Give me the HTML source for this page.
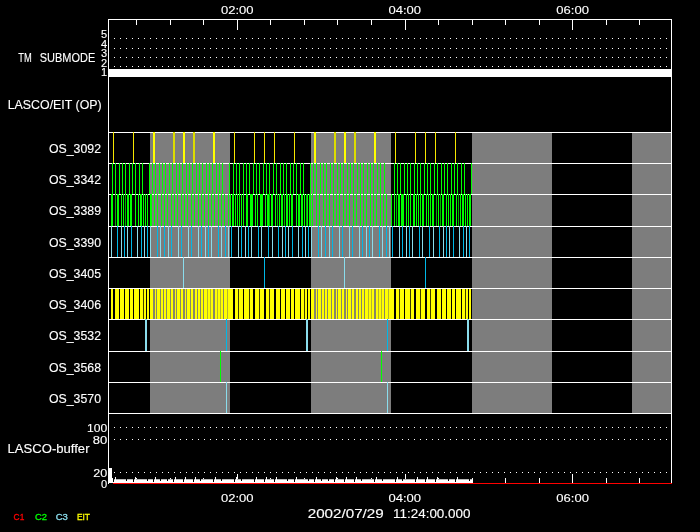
<!DOCTYPE html>
<html lang="en"><head><meta charset="utf-8"><title>LASCO/EIT schedule plot</title>
<style>
html,body{margin:0;padding:0;background:#000;}
body{width:700px;height:532px;overflow:hidden;}
svg{display:block;will-change:transform;font-family:"Liberation Sans",sans-serif;}
svg rect{shape-rendering:crispEdges;}
</style></head><body>
<svg width="700" height="532" viewBox="0 0 700 532">
<rect x="0" y="0" width="700" height="532" fill="#000"/>
<rect x="150" y="132" width="80" height="281" fill="#7d7d7d"/>
<rect x="311" y="132" width="80" height="281" fill="#7d7d7d"/>
<rect x="472" y="132" width="80" height="281" fill="#7d7d7d"/>
<rect x="632" y="132" width="39" height="281" fill="#7d7d7d"/>
<rect x="108" y="132" width="564" height="1" fill="#fff"/>
<rect x="108" y="163" width="564" height="1" fill="#fff"/>
<rect x="108" y="194" width="564" height="1" fill="#fff"/>
<rect x="108" y="226" width="564" height="1" fill="#fff"/>
<rect x="108" y="257" width="564" height="1" fill="#fff"/>
<rect x="108" y="288" width="564" height="1" fill="#fff"/>
<rect x="108" y="319" width="564" height="1" fill="#fff"/>
<rect x="108" y="351" width="564" height="1" fill="#fff"/>
<rect x="108" y="382" width="564" height="1" fill="#fff"/>
<rect x="108" y="413" width="564" height="1" fill="#fff"/>
<rect x="113" y="132" width="1" height="31" fill="#f6e600"/>
<rect x="133" y="132" width="1" height="31" fill="#f6e600"/>
<rect x="153" y="132" width="2" height="31" fill="#ffff00"/>
<rect x="173" y="132" width="2" height="31" fill="#dcdc00"/>
<rect x="183" y="132" width="2" height="31" fill="#ffff00"/>
<rect x="193" y="132" width="2" height="31" fill="#dcdc00"/>
<rect x="213" y="132" width="2" height="31" fill="#ffff00"/>
<rect x="234" y="132" width="1" height="31" fill="#f6e600"/>
<rect x="254" y="132" width="1" height="31" fill="#f6e600"/>
<rect x="264" y="132" width="1" height="31" fill="#f6e600"/>
<rect x="274" y="132" width="1" height="31" fill="#f6e600"/>
<rect x="294" y="132" width="1" height="31" fill="#f6e600"/>
<rect x="314" y="132" width="2" height="31" fill="#ffff00"/>
<rect x="334" y="132" width="2" height="31" fill="#dcdc00"/>
<rect x="344" y="132" width="2" height="31" fill="#ffff00"/>
<rect x="354" y="132" width="2" height="31" fill="#dcdc00"/>
<rect x="374" y="132" width="2" height="31" fill="#ffff00"/>
<rect x="395" y="132" width="1" height="31" fill="#f6e600"/>
<rect x="415" y="132" width="1" height="31" fill="#f6e600"/>
<rect x="425" y="132" width="1" height="31" fill="#f6e600"/>
<rect x="435" y="132" width="1" height="31" fill="#f6e600"/>
<rect x="455" y="132" width="1" height="31" fill="#f6e600"/>
<rect x="112" y="163" width="1" height="31" fill="#00ff00"/>
<rect x="115" y="163" width="1" height="31" fill="#00ff00"/>
<rect x="119" y="163" width="1" height="31" fill="#00ff00"/>
<rect x="122" y="163" width="1" height="31" fill="#00ff00"/>
<rect x="125" y="163" width="1" height="31" fill="#00ff00"/>
<rect x="129" y="163" width="1" height="31" fill="#00ff00"/>
<rect x="132" y="163" width="1" height="31" fill="#00ff00"/>
<rect x="135" y="163" width="1" height="31" fill="#00ff00"/>
<rect x="139" y="163" width="1" height="31" fill="#00ff00"/>
<rect x="142" y="163" width="1" height="31" fill="#00ff00"/>
<rect x="149" y="163" width="1" height="31" fill="#00ff00"/>
<rect x="152" y="163" width="1" height="31" fill="#00ff00"/>
<rect x="155" y="163" width="1" height="31" fill="#00ff00"/>
<rect x="159" y="163" width="1" height="31" fill="#00ff00"/>
<rect x="162" y="163" width="1" height="31" fill="#00ff00"/>
<rect x="165" y="163" width="1" height="31" fill="#00ff00"/>
<rect x="169" y="163" width="1" height="31" fill="#00ff00"/>
<rect x="172" y="163" width="1" height="31" fill="#00ff00"/>
<rect x="176" y="163" width="1" height="31" fill="#00ff00"/>
<rect x="179" y="163" width="1" height="31" fill="#00ff00"/>
<rect x="182" y="163" width="1" height="31" fill="#00ff00"/>
<rect x="186" y="163" width="1" height="31" fill="#00ff00"/>
<rect x="189" y="163" width="1" height="31" fill="#00ff00"/>
<rect x="192" y="163" width="1" height="31" fill="#00ff00"/>
<rect x="196" y="163" width="1" height="31" fill="#00ff00"/>
<rect x="199" y="163" width="1" height="31" fill="#00ff00"/>
<rect x="202" y="163" width="1" height="31" fill="#00ff00"/>
<rect x="206" y="163" width="1" height="31" fill="#00ff00"/>
<rect x="209" y="163" width="1" height="31" fill="#00ff00"/>
<rect x="212" y="163" width="1" height="31" fill="#00ff00"/>
<rect x="216" y="163" width="1" height="31" fill="#00ff00"/>
<rect x="219" y="163" width="1" height="31" fill="#00ff00"/>
<rect x="222" y="163" width="1" height="31" fill="#00ff00"/>
<rect x="229" y="163" width="1" height="31" fill="#00ff00"/>
<rect x="233" y="163" width="1" height="31" fill="#00ff00"/>
<rect x="236" y="163" width="1" height="31" fill="#00ff00"/>
<rect x="239" y="163" width="1" height="31" fill="#00ff00"/>
<rect x="243" y="163" width="1" height="31" fill="#00ff00"/>
<rect x="246" y="163" width="1" height="31" fill="#00ff00"/>
<rect x="249" y="163" width="1" height="31" fill="#00ff00"/>
<rect x="253" y="163" width="1" height="31" fill="#00ff00"/>
<rect x="256" y="163" width="1" height="31" fill="#00ff00"/>
<rect x="259" y="163" width="1" height="31" fill="#00ff00"/>
<rect x="263" y="163" width="1" height="31" fill="#00ff00"/>
<rect x="266" y="163" width="1" height="31" fill="#00ff00"/>
<rect x="269" y="163" width="1" height="31" fill="#00ff00"/>
<rect x="273" y="163" width="1" height="31" fill="#00ff00"/>
<rect x="276" y="163" width="1" height="31" fill="#00ff00"/>
<rect x="280" y="163" width="1" height="31" fill="#00ff00"/>
<rect x="283" y="163" width="1" height="31" fill="#00ff00"/>
<rect x="286" y="163" width="1" height="31" fill="#00ff00"/>
<rect x="290" y="163" width="1" height="31" fill="#00ff00"/>
<rect x="293" y="163" width="1" height="31" fill="#00ff00"/>
<rect x="296" y="163" width="1" height="31" fill="#00ff00"/>
<rect x="300" y="163" width="1" height="31" fill="#00ff00"/>
<rect x="303" y="163" width="1" height="31" fill="#00ff00"/>
<rect x="310" y="163" width="1" height="31" fill="#00ff00"/>
<rect x="313" y="163" width="1" height="31" fill="#00ff00"/>
<rect x="316" y="163" width="1" height="31" fill="#00ff00"/>
<rect x="320" y="163" width="1" height="31" fill="#00ff00"/>
<rect x="323" y="163" width="1" height="31" fill="#00ff00"/>
<rect x="326" y="163" width="1" height="31" fill="#00ff00"/>
<rect x="330" y="163" width="1" height="31" fill="#00ff00"/>
<rect x="333" y="163" width="1" height="31" fill="#00ff00"/>
<rect x="337" y="163" width="1" height="31" fill="#00ff00"/>
<rect x="340" y="163" width="1" height="31" fill="#00ff00"/>
<rect x="343" y="163" width="1" height="31" fill="#00ff00"/>
<rect x="347" y="163" width="1" height="31" fill="#00ff00"/>
<rect x="350" y="163" width="1" height="31" fill="#00ff00"/>
<rect x="353" y="163" width="1" height="31" fill="#00ff00"/>
<rect x="357" y="163" width="1" height="31" fill="#00ff00"/>
<rect x="360" y="163" width="1" height="31" fill="#00ff00"/>
<rect x="363" y="163" width="1" height="31" fill="#00ff00"/>
<rect x="367" y="163" width="1" height="31" fill="#00ff00"/>
<rect x="370" y="163" width="1" height="31" fill="#00ff00"/>
<rect x="373" y="163" width="1" height="31" fill="#00ff00"/>
<rect x="377" y="163" width="1" height="31" fill="#00ff00"/>
<rect x="380" y="163" width="1" height="31" fill="#00ff00"/>
<rect x="384" y="163" width="1" height="31" fill="#00ff00"/>
<rect x="394" y="163" width="1" height="31" fill="#00ff00"/>
<rect x="397" y="163" width="1" height="31" fill="#00ff00"/>
<rect x="400" y="163" width="1" height="31" fill="#00ff00"/>
<rect x="404" y="163" width="1" height="31" fill="#00ff00"/>
<rect x="407" y="163" width="1" height="31" fill="#00ff00"/>
<rect x="410" y="163" width="1" height="31" fill="#00ff00"/>
<rect x="414" y="163" width="1" height="31" fill="#00ff00"/>
<rect x="417" y="163" width="1" height="31" fill="#00ff00"/>
<rect x="420" y="163" width="1" height="31" fill="#00ff00"/>
<rect x="424" y="163" width="1" height="31" fill="#00ff00"/>
<rect x="427" y="163" width="1" height="31" fill="#00ff00"/>
<rect x="430" y="163" width="1" height="31" fill="#00ff00"/>
<rect x="434" y="163" width="1" height="31" fill="#00ff00"/>
<rect x="437" y="163" width="1" height="31" fill="#00ff00"/>
<rect x="441" y="163" width="1" height="31" fill="#00ff00"/>
<rect x="444" y="163" width="1" height="31" fill="#00ff00"/>
<rect x="447" y="163" width="1" height="31" fill="#00ff00"/>
<rect x="451" y="163" width="1" height="31" fill="#00ff00"/>
<rect x="454" y="163" width="1" height="31" fill="#00ff00"/>
<rect x="457" y="163" width="1" height="31" fill="#00ff00"/>
<rect x="461" y="163" width="1" height="31" fill="#00ff00"/>
<rect x="464" y="163" width="1" height="31" fill="#00ff00"/>
<rect x="471" y="163" width="1" height="31" fill="#00ff00"/>
<rect x="111" y="194" width="1" height="32" fill="#00ff00"/>
<rect x="112" y="194" width="1" height="32" fill="#00ff00"/>
<rect x="115" y="194" width="1" height="32" fill="#00b400"/>
<rect x="117" y="194" width="1" height="32" fill="#00ff00"/>
<rect x="118" y="194" width="1" height="32" fill="#00ff00"/>
<rect x="121" y="194" width="1" height="32" fill="#00ff00"/>
<rect x="123" y="194" width="1" height="32" fill="#00ff00"/>
<rect x="125" y="194" width="1" height="32" fill="#00b400"/>
<rect x="127" y="194" width="1" height="32" fill="#00ff00"/>
<rect x="128" y="194" width="1" height="32" fill="#00ff00"/>
<rect x="130" y="194" width="1" height="32" fill="#00ff00"/>
<rect x="131" y="194" width="1" height="32" fill="#00ff00"/>
<rect x="135" y="194" width="1" height="32" fill="#00ff00"/>
<rect x="138" y="194" width="1" height="32" fill="#00ff00"/>
<rect x="140" y="194" width="1" height="32" fill="#00ff00"/>
<rect x="141" y="194" width="1" height="32" fill="#00ff00"/>
<rect x="143" y="194" width="1" height="32" fill="#00ff00"/>
<rect x="145" y="194" width="1" height="32" fill="#00ff00"/>
<rect x="147" y="194" width="1" height="32" fill="#00ff00"/>
<rect x="150" y="194" width="1" height="32" fill="#00ff00"/>
<rect x="151" y="194" width="1" height="32" fill="#00ff00"/>
<rect x="230" y="194" width="1" height="32" fill="#00ff00"/>
<rect x="232" y="194" width="1" height="32" fill="#00ff00"/>
<rect x="233" y="194" width="1" height="32" fill="#00ff00"/>
<rect x="235" y="194" width="1" height="32" fill="#00ff00"/>
<rect x="237" y="194" width="1" height="32" fill="#00ff00"/>
<rect x="239" y="194" width="1" height="32" fill="#00ff00"/>
<rect x="241" y="194" width="1" height="32" fill="#00ff00"/>
<rect x="243" y="194" width="1" height="32" fill="#00ff00"/>
<rect x="246" y="194" width="1" height="32" fill="#00ff00"/>
<rect x="247" y="194" width="1" height="32" fill="#00ff00"/>
<rect x="250" y="194" width="1" height="32" fill="#00ff00"/>
<rect x="251" y="194" width="1" height="32" fill="#00ff00"/>
<rect x="252" y="194" width="1" height="32" fill="#00ff00"/>
<rect x="255" y="194" width="1" height="32" fill="#00ff00"/>
<rect x="257" y="194" width="1" height="32" fill="#00ff00"/>
<rect x="260" y="194" width="1" height="32" fill="#00ff00"/>
<rect x="261" y="194" width="1" height="32" fill="#00ff00"/>
<rect x="262" y="194" width="1" height="32" fill="#00ff00"/>
<rect x="265" y="194" width="1" height="32" fill="#00ff00"/>
<rect x="267" y="194" width="1" height="32" fill="#00ff00"/>
<rect x="268" y="194" width="1" height="32" fill="#00ff00"/>
<rect x="269" y="194" width="1" height="32" fill="#00b400"/>
<rect x="271" y="194" width="1" height="32" fill="#00ff00"/>
<rect x="272" y="194" width="1" height="32" fill="#00ff00"/>
<rect x="275" y="194" width="1" height="32" fill="#00ff00"/>
<rect x="277" y="194" width="1" height="32" fill="#00b400"/>
<rect x="279" y="194" width="1" height="32" fill="#00ff00"/>
<rect x="281" y="194" width="1" height="32" fill="#00ff00"/>
<rect x="282" y="194" width="1" height="32" fill="#00ff00"/>
<rect x="284" y="194" width="1" height="32" fill="#00b400"/>
<rect x="286" y="194" width="1" height="32" fill="#00ff00"/>
<rect x="287" y="194" width="1" height="32" fill="#00ff00"/>
<rect x="289" y="194" width="1" height="32" fill="#00ff00"/>
<rect x="291" y="194" width="1" height="32" fill="#00ff00"/>
<rect x="292" y="194" width="1" height="32" fill="#00ff00"/>
<rect x="296" y="194" width="1" height="32" fill="#00ff00"/>
<rect x="298" y="194" width="1" height="32" fill="#00ff00"/>
<rect x="299" y="194" width="1" height="32" fill="#00ff00"/>
<rect x="301" y="194" width="1" height="32" fill="#00ff00"/>
<rect x="302" y="194" width="1" height="32" fill="#00ff00"/>
<rect x="304" y="194" width="1" height="32" fill="#00ff00"/>
<rect x="306" y="194" width="1" height="32" fill="#00b400"/>
<rect x="307" y="194" width="1" height="32" fill="#00ff00"/>
<rect x="309" y="194" width="1" height="32" fill="#00ff00"/>
<rect x="310" y="194" width="1" height="32" fill="#00ff00"/>
<rect x="312" y="194" width="1" height="32" fill="#00ff00"/>
<rect x="391" y="194" width="1" height="32" fill="#00ff00"/>
<rect x="394" y="194" width="1" height="32" fill="#00ff00"/>
<rect x="396" y="194" width="1" height="32" fill="#00b400"/>
<rect x="398" y="194" width="1" height="32" fill="#00ff00"/>
<rect x="399" y="194" width="1" height="32" fill="#00ff00"/>
<rect x="401" y="194" width="1" height="32" fill="#00ff00"/>
<rect x="402" y="194" width="1" height="32" fill="#00ff00"/>
<rect x="403" y="194" width="1" height="32" fill="#00ff00"/>
<rect x="406" y="194" width="1" height="32" fill="#00ff00"/>
<rect x="408" y="194" width="1" height="32" fill="#00ff00"/>
<rect x="410" y="194" width="1" height="32" fill="#00ff00"/>
<rect x="413" y="194" width="1" height="32" fill="#00ff00"/>
<rect x="414" y="194" width="1" height="32" fill="#00ff00"/>
<rect x="416" y="194" width="1" height="32" fill="#00ff00"/>
<rect x="418" y="194" width="1" height="32" fill="#00ff00"/>
<rect x="420" y="194" width="1" height="32" fill="#00ff00"/>
<rect x="422" y="194" width="1" height="32" fill="#00ff00"/>
<rect x="423" y="194" width="1" height="32" fill="#00ff00"/>
<rect x="426" y="194" width="1" height="32" fill="#00ff00"/>
<rect x="428" y="194" width="1" height="32" fill="#00ff00"/>
<rect x="430" y="194" width="1" height="32" fill="#00ff00"/>
<rect x="432" y="194" width="1" height="32" fill="#00ff00"/>
<rect x="433" y="194" width="1" height="32" fill="#00ff00"/>
<rect x="436" y="194" width="1" height="32" fill="#00b400"/>
<rect x="438" y="194" width="1" height="32" fill="#00ff00"/>
<rect x="440" y="194" width="1" height="32" fill="#00b400"/>
<rect x="442" y="194" width="1" height="32" fill="#00ff00"/>
<rect x="443" y="194" width="1" height="32" fill="#00ff00"/>
<rect x="446" y="194" width="1" height="32" fill="#00ff00"/>
<rect x="448" y="194" width="1" height="32" fill="#00ff00"/>
<rect x="450" y="194" width="1" height="32" fill="#00ff00"/>
<rect x="452" y="194" width="1" height="32" fill="#00ff00"/>
<rect x="453" y="194" width="1" height="32" fill="#00ff00"/>
<rect x="456" y="194" width="1" height="32" fill="#00ff00"/>
<rect x="458" y="194" width="1" height="32" fill="#00b400"/>
<rect x="460" y="194" width="1" height="32" fill="#00ff00"/>
<rect x="462" y="194" width="1" height="32" fill="#00ff00"/>
<rect x="463" y="194" width="1" height="32" fill="#00ff00"/>
<rect x="465" y="194" width="1" height="32" fill="#00ff00"/>
<rect x="467" y="194" width="1" height="32" fill="#00ff00"/>
<rect x="469" y="194" width="1" height="32" fill="#00ff00"/>
<rect x="470" y="194" width="1" height="32" fill="#00ff00"/>
<rect x="154" y="194" width="1" height="32" fill="#00ff00"/>
<rect x="157" y="194" width="1" height="32" fill="#00ff00"/>
<rect x="161" y="194" width="1" height="32" fill="#00ff00"/>
<rect x="164" y="194" width="1" height="32" fill="#00ff00"/>
<rect x="167" y="194" width="1" height="32" fill="#00ff00"/>
<rect x="171" y="194" width="1" height="32" fill="#00ff00"/>
<rect x="174" y="194" width="1" height="32" fill="#00ff00"/>
<rect x="177" y="194" width="1" height="32" fill="#00ff00"/>
<rect x="181" y="194" width="1" height="32" fill="#00ff00"/>
<rect x="184" y="194" width="1" height="32" fill="#00ff00"/>
<rect x="187" y="194" width="1" height="32" fill="#00ff00"/>
<rect x="191" y="194" width="1" height="32" fill="#00ff00"/>
<rect x="194" y="194" width="1" height="32" fill="#00ff00"/>
<rect x="198" y="194" width="1" height="32" fill="#00ff00"/>
<rect x="201" y="194" width="1" height="32" fill="#00ff00"/>
<rect x="204" y="194" width="1" height="32" fill="#00ff00"/>
<rect x="208" y="194" width="1" height="32" fill="#00ff00"/>
<rect x="211" y="194" width="1" height="32" fill="#00ff00"/>
<rect x="214" y="194" width="1" height="32" fill="#00ff00"/>
<rect x="218" y="194" width="1" height="32" fill="#00ff00"/>
<rect x="221" y="194" width="1" height="32" fill="#00ff00"/>
<rect x="224" y="194" width="1" height="32" fill="#00ff00"/>
<rect x="228" y="194" width="1" height="32" fill="#00ff00"/>
<rect x="316" y="194" width="1" height="32" fill="#00ff00"/>
<rect x="319" y="194" width="1" height="32" fill="#00ff00"/>
<rect x="323" y="194" width="1" height="32" fill="#00ff00"/>
<rect x="326" y="194" width="1" height="32" fill="#00ff00"/>
<rect x="329" y="194" width="1" height="32" fill="#00ff00"/>
<rect x="333" y="194" width="1" height="32" fill="#00ff00"/>
<rect x="336" y="194" width="1" height="32" fill="#00ff00"/>
<rect x="339" y="194" width="1" height="32" fill="#00ff00"/>
<rect x="343" y="194" width="1" height="32" fill="#00ff00"/>
<rect x="346" y="194" width="1" height="32" fill="#00ff00"/>
<rect x="349" y="194" width="1" height="32" fill="#00ff00"/>
<rect x="353" y="194" width="1" height="32" fill="#00ff00"/>
<rect x="356" y="194" width="1" height="32" fill="#00ff00"/>
<rect x="360" y="194" width="1" height="32" fill="#00ff00"/>
<rect x="363" y="194" width="1" height="32" fill="#00ff00"/>
<rect x="366" y="194" width="1" height="32" fill="#00ff00"/>
<rect x="370" y="194" width="1" height="32" fill="#00ff00"/>
<rect x="373" y="194" width="1" height="32" fill="#00ff00"/>
<rect x="376" y="194" width="1" height="32" fill="#00ff00"/>
<rect x="380" y="194" width="1" height="32" fill="#00ff00"/>
<rect x="383" y="194" width="1" height="32" fill="#00ff00"/>
<rect x="386" y="194" width="1" height="32" fill="#00ff00"/>
<rect x="111" y="226" width="1" height="31" fill="#8adcec"/>
<rect x="117" y="226" width="1" height="31" fill="#00b8e6"/>
<rect x="121" y="226" width="1" height="31" fill="#8adcec"/>
<rect x="124" y="226" width="1" height="31" fill="#00b8e6"/>
<rect x="127" y="226" width="1" height="31" fill="#8adcec"/>
<rect x="131" y="226" width="1" height="31" fill="#00b8e6"/>
<rect x="137" y="226" width="1" height="31" fill="#8adcec"/>
<rect x="141" y="226" width="1" height="31" fill="#00b8e6"/>
<rect x="144" y="226" width="1" height="31" fill="#8adcec"/>
<rect x="147" y="226" width="1" height="31" fill="#00b8e6"/>
<rect x="150" y="226" width="1" height="31" fill="#8adcec"/>
<rect x="157" y="226" width="1" height="31" fill="#00b8e6"/>
<rect x="160" y="226" width="1" height="31" fill="#8adcec"/>
<rect x="164" y="226" width="1" height="31" fill="#00b8e6"/>
<rect x="168" y="226" width="1" height="31" fill="#8adcec"/>
<rect x="171" y="226" width="1" height="31" fill="#00b8e6"/>
<rect x="178" y="226" width="1" height="31" fill="#8adcec"/>
<rect x="181" y="226" width="1" height="31" fill="#00b8e6"/>
<rect x="188" y="226" width="1" height="31" fill="#8adcec"/>
<rect x="191" y="226" width="1" height="31" fill="#00b8e6"/>
<rect x="198" y="226" width="1" height="31" fill="#8adcec"/>
<rect x="201" y="226" width="1" height="31" fill="#00b8e6"/>
<rect x="205" y="226" width="1" height="31" fill="#8adcec"/>
<rect x="208" y="226" width="1" height="31" fill="#00b8e6"/>
<rect x="211" y="226" width="1" height="31" fill="#8adcec"/>
<rect x="218" y="226" width="1" height="31" fill="#00b8e6"/>
<rect x="221" y="226" width="1" height="31" fill="#8adcec"/>
<rect x="225" y="226" width="1" height="31" fill="#00b8e6"/>
<rect x="228" y="226" width="1" height="31" fill="#8adcec"/>
<rect x="231" y="226" width="1" height="31" fill="#00b8e6"/>
<rect x="238" y="226" width="1" height="31" fill="#8adcec"/>
<rect x="241" y="226" width="1" height="31" fill="#00b8e6"/>
<rect x="245" y="226" width="1" height="31" fill="#8adcec"/>
<rect x="248" y="226" width="1" height="31" fill="#00b8e6"/>
<rect x="251" y="226" width="1" height="31" fill="#8adcec"/>
<rect x="258" y="226" width="1" height="31" fill="#00b8e6"/>
<rect x="261" y="226" width="1" height="31" fill="#8adcec"/>
<rect x="268" y="226" width="1" height="31" fill="#00b8e6"/>
<rect x="272" y="226" width="1" height="31" fill="#8adcec"/>
<rect x="278" y="226" width="1" height="31" fill="#00b8e6"/>
<rect x="282" y="226" width="1" height="31" fill="#8adcec"/>
<rect x="285" y="226" width="1" height="31" fill="#00b8e6"/>
<rect x="288" y="226" width="1" height="31" fill="#8adcec"/>
<rect x="292" y="226" width="1" height="31" fill="#00b8e6"/>
<rect x="298" y="226" width="1" height="31" fill="#8adcec"/>
<rect x="302" y="226" width="1" height="31" fill="#00b8e6"/>
<rect x="305" y="226" width="1" height="31" fill="#8adcec"/>
<rect x="308" y="226" width="1" height="31" fill="#00b8e6"/>
<rect x="311" y="226" width="1" height="31" fill="#8adcec"/>
<rect x="318" y="226" width="1" height="31" fill="#00b8e6"/>
<rect x="321" y="226" width="1" height="31" fill="#8adcec"/>
<rect x="325" y="226" width="1" height="31" fill="#00b8e6"/>
<rect x="329" y="226" width="1" height="31" fill="#8adcec"/>
<rect x="332" y="226" width="1" height="31" fill="#00b8e6"/>
<rect x="339" y="226" width="1" height="31" fill="#8adcec"/>
<rect x="342" y="226" width="1" height="31" fill="#00b8e6"/>
<rect x="349" y="226" width="1" height="31" fill="#8adcec"/>
<rect x="352" y="226" width="1" height="31" fill="#00b8e6"/>
<rect x="359" y="226" width="1" height="31" fill="#8adcec"/>
<rect x="362" y="226" width="1" height="31" fill="#00b8e6"/>
<rect x="366" y="226" width="1" height="31" fill="#8adcec"/>
<rect x="369" y="226" width="1" height="31" fill="#00b8e6"/>
<rect x="372" y="226" width="1" height="31" fill="#8adcec"/>
<rect x="379" y="226" width="1" height="31" fill="#00b8e6"/>
<rect x="382" y="226" width="1" height="31" fill="#8adcec"/>
<rect x="386" y="226" width="1" height="31" fill="#00b8e6"/>
<rect x="389" y="226" width="1" height="31" fill="#8adcec"/>
<rect x="392" y="226" width="1" height="31" fill="#00b8e6"/>
<rect x="399" y="226" width="1" height="31" fill="#8adcec"/>
<rect x="402" y="226" width="1" height="31" fill="#00b8e6"/>
<rect x="406" y="226" width="1" height="31" fill="#8adcec"/>
<rect x="409" y="226" width="1" height="31" fill="#00b8e6"/>
<rect x="412" y="226" width="1" height="31" fill="#8adcec"/>
<rect x="419" y="226" width="1" height="31" fill="#00b8e6"/>
<rect x="422" y="226" width="1" height="31" fill="#8adcec"/>
<rect x="429" y="226" width="1" height="31" fill="#00b8e6"/>
<rect x="433" y="226" width="1" height="31" fill="#8adcec"/>
<rect x="439" y="226" width="1" height="31" fill="#00b8e6"/>
<rect x="443" y="226" width="1" height="31" fill="#8adcec"/>
<rect x="446" y="226" width="1" height="31" fill="#00b8e6"/>
<rect x="449" y="226" width="1" height="31" fill="#8adcec"/>
<rect x="453" y="226" width="1" height="31" fill="#00b8e6"/>
<rect x="459" y="226" width="1" height="31" fill="#8adcec"/>
<rect x="463" y="226" width="1" height="31" fill="#00b8e6"/>
<rect x="466" y="226" width="1" height="31" fill="#8adcec"/>
<rect x="469" y="226" width="1" height="31" fill="#00b8e6"/>
<rect x="183" y="257" width="1" height="31" fill="#8adcec"/>
<rect x="264" y="257" width="1" height="31" fill="#00b8e6"/>
<rect x="344" y="257" width="1" height="31" fill="#8adcec"/>
<rect x="425" y="257" width="1" height="31" fill="#00b8e6"/>
<rect x="111" y="289" width="361" height="30" fill="#ffff00"/>
<rect x="113" y="289" width="2" height="30" fill="#000"/>
<rect x="119" y="289" width="1" height="30" fill="#000"/>
<rect x="124" y="289" width="1" height="30" fill="#000"/>
<rect x="129" y="289" width="1" height="30" fill="#000"/>
<rect x="133" y="289" width="1" height="30" fill="#000"/>
<rect x="139" y="289" width="1" height="30" fill="#000"/>
<rect x="143" y="289" width="1" height="30" fill="#3c3c00"/>
<rect x="146" y="289" width="1" height="30" fill="#000"/>
<rect x="149" y="289" width="1" height="30" fill="#000"/>
<rect x="153" y="289" width="1" height="30" fill="#86866a"/>
<rect x="156" y="289" width="1" height="30" fill="#86866a"/>
<rect x="160" y="289" width="1" height="30" fill="#86866a"/>
<rect x="163" y="289" width="1" height="30" fill="#86866a"/>
<rect x="166" y="289" width="1" height="30" fill="#86866a"/>
<rect x="170" y="289" width="1" height="30" fill="#86866a"/>
<rect x="173" y="289" width="1" height="30" fill="#86866a"/>
<rect x="176" y="289" width="1" height="30" fill="#86866a"/>
<rect x="180" y="289" width="1" height="30" fill="#86866a"/>
<rect x="183" y="289" width="1" height="30" fill="#86866a"/>
<rect x="186" y="289" width="1" height="30" fill="#86866a"/>
<rect x="190" y="289" width="1" height="30" fill="#86866a"/>
<rect x="193" y="289" width="1" height="30" fill="#86866a"/>
<rect x="197" y="289" width="1" height="30" fill="#86866a"/>
<rect x="200" y="289" width="1" height="30" fill="#86866a"/>
<rect x="203" y="289" width="1" height="30" fill="#86866a"/>
<rect x="207" y="289" width="1" height="30" fill="#b4b430"/>
<rect x="210" y="289" width="1" height="30" fill="#b4b430"/>
<rect x="213" y="289" width="1" height="30" fill="#86866a"/>
<rect x="217" y="289" width="1" height="30" fill="#b4b430"/>
<rect x="220" y="289" width="1" height="30" fill="#b4b430"/>
<rect x="223" y="289" width="1" height="30" fill="#86866a"/>
<rect x="227" y="289" width="1" height="30" fill="#b4b430"/>
<rect x="153" y="289" width="2" height="30" fill="#86866a"/>
<rect x="173" y="289" width="2" height="30" fill="#86866a"/>
<rect x="183" y="289" width="2" height="30" fill="#86866a"/>
<rect x="193" y="289" width="2" height="30" fill="#86866a"/>
<rect x="213" y="289" width="2" height="30" fill="#86866a"/>
<rect x="233" y="289" width="2" height="30" fill="#000"/>
<rect x="238" y="289" width="1" height="30" fill="#3c3c00"/>
<rect x="243" y="289" width="1" height="30" fill="#000"/>
<rect x="249" y="289" width="1" height="30" fill="#3c3c00"/>
<rect x="253" y="289" width="2" height="30" fill="#000"/>
<rect x="259" y="289" width="1" height="30" fill="#3c3c00"/>
<rect x="264" y="289" width="2" height="30" fill="#000"/>
<rect x="269" y="289" width="1" height="30" fill="#3c3c00"/>
<rect x="274" y="289" width="2" height="30" fill="#000"/>
<rect x="280" y="289" width="1" height="30" fill="#000"/>
<rect x="285" y="289" width="1" height="30" fill="#000"/>
<rect x="290" y="289" width="1" height="30" fill="#000"/>
<rect x="294" y="289" width="1" height="30" fill="#000"/>
<rect x="300" y="289" width="1" height="30" fill="#000"/>
<rect x="304" y="289" width="1" height="30" fill="#3c3c00"/>
<rect x="307" y="289" width="1" height="30" fill="#000"/>
<rect x="310" y="289" width="1" height="30" fill="#000"/>
<rect x="314" y="289" width="1" height="30" fill="#86866a"/>
<rect x="317" y="289" width="1" height="30" fill="#86866a"/>
<rect x="321" y="289" width="1" height="30" fill="#86866a"/>
<rect x="324" y="289" width="1" height="30" fill="#86866a"/>
<rect x="327" y="289" width="1" height="30" fill="#86866a"/>
<rect x="331" y="289" width="1" height="30" fill="#86866a"/>
<rect x="334" y="289" width="1" height="30" fill="#86866a"/>
<rect x="337" y="289" width="1" height="30" fill="#86866a"/>
<rect x="341" y="289" width="1" height="30" fill="#86866a"/>
<rect x="344" y="289" width="1" height="30" fill="#86866a"/>
<rect x="347" y="289" width="1" height="30" fill="#86866a"/>
<rect x="351" y="289" width="1" height="30" fill="#86866a"/>
<rect x="354" y="289" width="1" height="30" fill="#86866a"/>
<rect x="358" y="289" width="1" height="30" fill="#86866a"/>
<rect x="361" y="289" width="1" height="30" fill="#86866a"/>
<rect x="364" y="289" width="1" height="30" fill="#86866a"/>
<rect x="368" y="289" width="1" height="30" fill="#b4b430"/>
<rect x="371" y="289" width="1" height="30" fill="#b4b430"/>
<rect x="374" y="289" width="1" height="30" fill="#86866a"/>
<rect x="378" y="289" width="1" height="30" fill="#b4b430"/>
<rect x="381" y="289" width="1" height="30" fill="#b4b430"/>
<rect x="384" y="289" width="1" height="30" fill="#86866a"/>
<rect x="388" y="289" width="1" height="30" fill="#b4b430"/>
<rect x="314" y="289" width="2" height="30" fill="#86866a"/>
<rect x="334" y="289" width="2" height="30" fill="#86866a"/>
<rect x="344" y="289" width="2" height="30" fill="#86866a"/>
<rect x="354" y="289" width="2" height="30" fill="#86866a"/>
<rect x="374" y="289" width="2" height="30" fill="#86866a"/>
<rect x="394" y="289" width="2" height="30" fill="#000"/>
<rect x="399" y="289" width="1" height="30" fill="#3c3c00"/>
<rect x="404" y="289" width="1" height="30" fill="#000"/>
<rect x="410" y="289" width="1" height="30" fill="#3c3c00"/>
<rect x="414" y="289" width="2" height="30" fill="#000"/>
<rect x="420" y="289" width="1" height="30" fill="#3c3c00"/>
<rect x="425" y="289" width="2" height="30" fill="#000"/>
<rect x="430" y="289" width="1" height="30" fill="#3c3c00"/>
<rect x="435" y="289" width="2" height="30" fill="#000"/>
<rect x="441" y="289" width="1" height="30" fill="#000"/>
<rect x="446" y="289" width="1" height="30" fill="#000"/>
<rect x="451" y="289" width="1" height="30" fill="#000"/>
<rect x="455" y="289" width="1" height="30" fill="#000"/>
<rect x="461" y="289" width="1" height="30" fill="#000"/>
<rect x="465" y="289" width="1" height="30" fill="#3c3c00"/>
<rect x="468" y="289" width="1" height="30" fill="#000"/>
<rect x="471" y="289" width="1" height="30" fill="#000"/>
<rect x="145" y="319" width="2" height="32" fill="#8adcec"/>
<rect x="226" y="319" width="1" height="32" fill="#00b8e6"/>
<rect x="306" y="319" width="2" height="32" fill="#8adcec"/>
<rect x="387" y="319" width="1" height="32" fill="#00b8e6"/>
<rect x="467" y="319" width="2" height="32" fill="#8adcec"/>
<rect x="220" y="351" width="1" height="31" fill="#00ff00"/>
<rect x="381" y="351" width="1" height="31" fill="#00ff00"/>
<rect x="226" y="382" width="1" height="31" fill="#8adcec"/>
<rect x="387" y="382" width="1" height="31" fill="#8adcec"/>
<rect x="108" y="69" width="564" height="8" fill="#fff"/>
<path d="M114 38.5H667" stroke="#fff" stroke-width="1" stroke-dasharray="1 5" fill="none" shape-rendering="crispEdges"/>
<path d="M114 48.5H667" stroke="#fff" stroke-width="1" stroke-dasharray="1 5" fill="none" shape-rendering="crispEdges"/>
<path d="M114 57.5H667" stroke="#fff" stroke-width="1" stroke-dasharray="1 5" fill="none" shape-rendering="crispEdges"/>
<path d="M114 66.5H667" stroke="#fff" stroke-width="1" stroke-dasharray="1 5" fill="none" shape-rendering="crispEdges"/>
<path d="M114 427.5H667" stroke="#fff" stroke-width="1" stroke-dasharray="1 5" fill="none" shape-rendering="crispEdges"/>
<path d="M114 439.5H667" stroke="#fff" stroke-width="1" stroke-dasharray="1 5" fill="none" shape-rendering="crispEdges"/>
<path d="M114 472.5H667" stroke="#fff" stroke-width="1" stroke-dasharray="1 5" fill="none" shape-rendering="crispEdges"/>
<rect x="108" y="19" width="564" height="1" fill="#fff"/>
<rect x="108" y="19" width="1" height="465" fill="#fff"/>
<rect x="671" y="19" width="1" height="465" fill="#fff"/>
<rect x="136" y="19" width="1" height="6" fill="#fff"/>
<rect x="136" y="478" width="1" height="5" fill="#fff"/>
<rect x="170" y="19" width="1" height="6" fill="#fff"/>
<rect x="170" y="478" width="1" height="5" fill="#fff"/>
<rect x="203" y="19" width="1" height="6" fill="#fff"/>
<rect x="203" y="478" width="1" height="5" fill="#fff"/>
<rect x="237" y="19" width="1" height="11" fill="#fff"/>
<rect x="237" y="474" width="1" height="9" fill="#fff"/>
<rect x="270" y="19" width="1" height="6" fill="#fff"/>
<rect x="270" y="478" width="1" height="5" fill="#fff"/>
<rect x="304" y="19" width="1" height="6" fill="#fff"/>
<rect x="304" y="478" width="1" height="5" fill="#fff"/>
<rect x="337" y="19" width="1" height="6" fill="#fff"/>
<rect x="337" y="478" width="1" height="5" fill="#fff"/>
<rect x="371" y="19" width="1" height="6" fill="#fff"/>
<rect x="371" y="478" width="1" height="5" fill="#fff"/>
<rect x="405" y="19" width="1" height="11" fill="#fff"/>
<rect x="405" y="474" width="1" height="9" fill="#fff"/>
<rect x="438" y="19" width="1" height="6" fill="#fff"/>
<rect x="438" y="478" width="1" height="5" fill="#fff"/>
<rect x="472" y="19" width="1" height="6" fill="#fff"/>
<rect x="472" y="478" width="1" height="5" fill="#fff"/>
<rect x="505" y="19" width="1" height="6" fill="#fff"/>
<rect x="505" y="478" width="1" height="5" fill="#fff"/>
<rect x="539" y="19" width="1" height="6" fill="#fff"/>
<rect x="539" y="478" width="1" height="5" fill="#fff"/>
<rect x="572" y="19" width="1" height="11" fill="#fff"/>
<rect x="572" y="474" width="1" height="9" fill="#fff"/>
<rect x="606" y="19" width="1" height="6" fill="#fff"/>
<rect x="606" y="478" width="1" height="5" fill="#fff"/>
<rect x="639" y="19" width="1" height="6" fill="#fff"/>
<rect x="639" y="478" width="1" height="5" fill="#fff"/>
<rect x="109" y="480" width="363" height="3" fill="#fff"/>
<rect x="109" y="479" width="363" height="1" fill="#bbb"/>
<rect x="109" y="468" width="3" height="15" fill="#fff"/>
<rect x="112" y="478" width="1" height="5" fill="#fff"/>
<rect x="115" y="477" width="1" height="3" fill="#fff"/>
<rect x="113" y="479" width="1" height="3" fill="#000"/>
<rect x="135" y="477" width="1" height="3" fill="#fff"/>
<rect x="133" y="479" width="1" height="3" fill="#000"/>
<rect x="155" y="477" width="1" height="3" fill="#fff"/>
<rect x="153" y="479" width="1" height="3" fill="#000"/>
<rect x="175" y="477" width="1" height="3" fill="#fff"/>
<rect x="173" y="479" width="1" height="3" fill="#000"/>
<rect x="185" y="477" width="1" height="3" fill="#fff"/>
<rect x="183" y="479" width="1" height="3" fill="#000"/>
<rect x="195" y="477" width="1" height="3" fill="#fff"/>
<rect x="193" y="479" width="1" height="3" fill="#000"/>
<rect x="215" y="477" width="1" height="3" fill="#fff"/>
<rect x="213" y="479" width="1" height="3" fill="#000"/>
<rect x="236" y="477" width="1" height="3" fill="#fff"/>
<rect x="234" y="479" width="1" height="3" fill="#000"/>
<rect x="256" y="477" width="1" height="3" fill="#fff"/>
<rect x="254" y="479" width="1" height="3" fill="#000"/>
<rect x="266" y="477" width="1" height="3" fill="#fff"/>
<rect x="264" y="479" width="1" height="3" fill="#000"/>
<rect x="276" y="477" width="1" height="3" fill="#fff"/>
<rect x="274" y="479" width="1" height="3" fill="#000"/>
<rect x="296" y="477" width="1" height="3" fill="#fff"/>
<rect x="294" y="479" width="1" height="3" fill="#000"/>
<rect x="316" y="477" width="1" height="3" fill="#fff"/>
<rect x="314" y="479" width="1" height="3" fill="#000"/>
<rect x="336" y="477" width="1" height="3" fill="#fff"/>
<rect x="334" y="479" width="1" height="3" fill="#000"/>
<rect x="346" y="477" width="1" height="3" fill="#fff"/>
<rect x="344" y="479" width="1" height="3" fill="#000"/>
<rect x="356" y="477" width="1" height="3" fill="#fff"/>
<rect x="354" y="479" width="1" height="3" fill="#000"/>
<rect x="376" y="477" width="1" height="3" fill="#fff"/>
<rect x="374" y="479" width="1" height="3" fill="#000"/>
<rect x="397" y="477" width="1" height="3" fill="#fff"/>
<rect x="395" y="479" width="1" height="3" fill="#000"/>
<rect x="417" y="477" width="1" height="3" fill="#fff"/>
<rect x="415" y="479" width="1" height="3" fill="#000"/>
<rect x="427" y="477" width="1" height="3" fill="#fff"/>
<rect x="425" y="479" width="1" height="3" fill="#000"/>
<rect x="437" y="477" width="1" height="3" fill="#fff"/>
<rect x="435" y="479" width="1" height="3" fill="#000"/>
<rect x="457" y="477" width="1" height="3" fill="#fff"/>
<rect x="455" y="479" width="1" height="3" fill="#000"/>
<rect x="126" y="479" width="1" height="2" fill="#000"/>
<rect x="147" y="479" width="1" height="2" fill="#000"/>
<rect x="160" y="479" width="1" height="2" fill="#000"/>
<rect x="167" y="479" width="1" height="2" fill="#000"/>
<rect x="200" y="479" width="1" height="2" fill="#000"/>
<rect x="221" y="479" width="1" height="2" fill="#000"/>
<rect x="241" y="479" width="1" height="2" fill="#000"/>
<rect x="287" y="479" width="1" height="2" fill="#000"/>
<rect x="308" y="479" width="1" height="2" fill="#000"/>
<rect x="321" y="479" width="1" height="2" fill="#000"/>
<rect x="328" y="479" width="1" height="2" fill="#000"/>
<rect x="361" y="479" width="1" height="2" fill="#000"/>
<rect x="382" y="479" width="1" height="2" fill="#000"/>
<rect x="402" y="479" width="1" height="2" fill="#000"/>
<rect x="448" y="479" width="1" height="2" fill="#000"/>
<rect x="469" y="479" width="1" height="2" fill="#000"/>
<rect x="113" y="483" width="559" height="1" fill="#ff0000"/>
<text x="220.9" y="14" font-size="11.5" text-anchor="start" fill="#fff" stroke="#fff" stroke-width="0.12" textLength="32.6" lengthAdjust="spacingAndGlyphs">02:00</text>
<text x="220.9" y="502" font-size="11.5" text-anchor="start" fill="#fff" stroke="#fff" stroke-width="0.12" textLength="32.6" lengthAdjust="spacingAndGlyphs">02:00</text>
<text x="388.5" y="14" font-size="11.5" text-anchor="start" fill="#fff" stroke="#fff" stroke-width="0.12" textLength="32.6" lengthAdjust="spacingAndGlyphs">04:00</text>
<text x="388.5" y="502" font-size="11.5" text-anchor="start" fill="#fff" stroke="#fff" stroke-width="0.12" textLength="32.6" lengthAdjust="spacingAndGlyphs">04:00</text>
<text x="556.3" y="14" font-size="11.5" text-anchor="start" fill="#fff" stroke="#fff" stroke-width="0.12" textLength="32.6" lengthAdjust="spacingAndGlyphs">06:00</text>
<text x="556.3" y="502" font-size="11.5" text-anchor="start" fill="#fff" stroke="#fff" stroke-width="0.12" textLength="32.6" lengthAdjust="spacingAndGlyphs">06:00</text>
<text x="307.7" y="518" font-size="12.5" text-anchor="start" fill="#fff" stroke="#fff" stroke-width="0.12" textLength="76" lengthAdjust="spacingAndGlyphs">2002/07/29</text>
<text x="393" y="518" font-size="12.5" text-anchor="start" fill="#fff" stroke="#fff" stroke-width="0.12" textLength="77.5" lengthAdjust="spacingAndGlyphs">11:24:00.000</text>
<text x="18.3" y="62" font-size="12.5" text-anchor="start" fill="#fff" stroke="#fff" stroke-width="0.12" textLength="13.5" lengthAdjust="spacingAndGlyphs">TM</text>
<text x="39.8" y="62" font-size="12.5" text-anchor="start" fill="#fff" stroke="#fff" stroke-width="0.12" textLength="55.5" lengthAdjust="spacingAndGlyphs">SUBMODE</text>
<text x="7.7" y="109" font-size="12.5" text-anchor="start" fill="#fff" stroke="#fff" stroke-width="0.12" textLength="94" lengthAdjust="spacingAndGlyphs">LASCO/EIT (OP)</text>
<text x="49" y="152.5" font-size="12.5" text-anchor="start" fill="#fff" stroke="#fff" stroke-width="0.12" textLength="52" lengthAdjust="spacingAndGlyphs">OS_3092</text>
<text x="49" y="183.5" font-size="12.5" text-anchor="start" fill="#fff" stroke="#fff" stroke-width="0.12" textLength="52" lengthAdjust="spacingAndGlyphs">OS_3342</text>
<text x="49" y="215" font-size="12.5" text-anchor="start" fill="#fff" stroke="#fff" stroke-width="0.12" textLength="52" lengthAdjust="spacingAndGlyphs">OS_3389</text>
<text x="49" y="246.5" font-size="12.5" text-anchor="start" fill="#fff" stroke="#fff" stroke-width="0.12" textLength="52" lengthAdjust="spacingAndGlyphs">OS_3390</text>
<text x="49" y="277.5" font-size="12.5" text-anchor="start" fill="#fff" stroke="#fff" stroke-width="0.12" textLength="52" lengthAdjust="spacingAndGlyphs">OS_3405</text>
<text x="49" y="308.5" font-size="12.5" text-anchor="start" fill="#fff" stroke="#fff" stroke-width="0.12" textLength="52" lengthAdjust="spacingAndGlyphs">OS_3406</text>
<text x="49" y="340" font-size="12.5" text-anchor="start" fill="#fff" stroke="#fff" stroke-width="0.12" textLength="52" lengthAdjust="spacingAndGlyphs">OS_3532</text>
<text x="49" y="371.5" font-size="12.5" text-anchor="start" fill="#fff" stroke="#fff" stroke-width="0.12" textLength="52" lengthAdjust="spacingAndGlyphs">OS_3568</text>
<text x="49" y="402.5" font-size="12.5" text-anchor="start" fill="#fff" stroke="#fff" stroke-width="0.12" textLength="52" lengthAdjust="spacingAndGlyphs">OS_3570</text>
<text x="7.5" y="453" font-size="12.5" text-anchor="start" fill="#fff" stroke="#fff" stroke-width="0.12" textLength="82" lengthAdjust="spacingAndGlyphs">LASCO-buffer</text>
<text x="107" y="38" font-size="11" text-anchor="end" fill="#fff" stroke="#fff" stroke-width="0.12">5</text>
<text x="107" y="48" font-size="11" text-anchor="end" fill="#fff" stroke="#fff" stroke-width="0.12">4</text>
<text x="107" y="57" font-size="11" text-anchor="end" fill="#fff" stroke="#fff" stroke-width="0.12">3</text>
<text x="107" y="66.5" font-size="11" text-anchor="end" fill="#fff" stroke="#fff" stroke-width="0.12">2</text>
<text x="107" y="76" font-size="11" text-anchor="end" fill="#fff" stroke="#fff" stroke-width="0.12">1</text>
<text x="87" y="431.5" font-size="11.5" text-anchor="start" fill="#fff" stroke="#fff" stroke-width="0.12" textLength="20.2" lengthAdjust="spacingAndGlyphs">100</text>
<text x="92.7" y="443.5" font-size="11.5" text-anchor="start" fill="#fff" stroke="#fff" stroke-width="0.12" textLength="14.5" lengthAdjust="spacingAndGlyphs">80</text>
<text x="93.2" y="477" font-size="11.5" text-anchor="start" fill="#fff" stroke="#fff" stroke-width="0.12" textLength="14" lengthAdjust="spacingAndGlyphs">20</text>
<text x="101" y="488" font-size="11.5" text-anchor="start" fill="#fff" stroke="#fff" stroke-width="0.12" textLength="6.2" lengthAdjust="spacingAndGlyphs">0</text>
<text x="13.6" y="520" font-size="9.3" text-anchor="start" fill="#ff0000" stroke="#ff0000" stroke-width="0.3" textLength="10.7" lengthAdjust="spacingAndGlyphs">C1</text>
<text x="35" y="520" font-size="9.3" text-anchor="start" fill="#00ff00" stroke="#00ff00" stroke-width="0.3" textLength="12.1" lengthAdjust="spacingAndGlyphs">C2</text>
<text x="55.7" y="520" font-size="9.3" text-anchor="start" fill="#8adcec" stroke="#8adcec" stroke-width="0.3" textLength="12.2" lengthAdjust="spacingAndGlyphs">C3</text>
<text x="76.9" y="520" font-size="9.3" text-anchor="start" fill="#ffff00" stroke="#ffff00" stroke-width="0.3" textLength="13.1" lengthAdjust="spacingAndGlyphs">EIT</text>
</svg>
</body></html>
